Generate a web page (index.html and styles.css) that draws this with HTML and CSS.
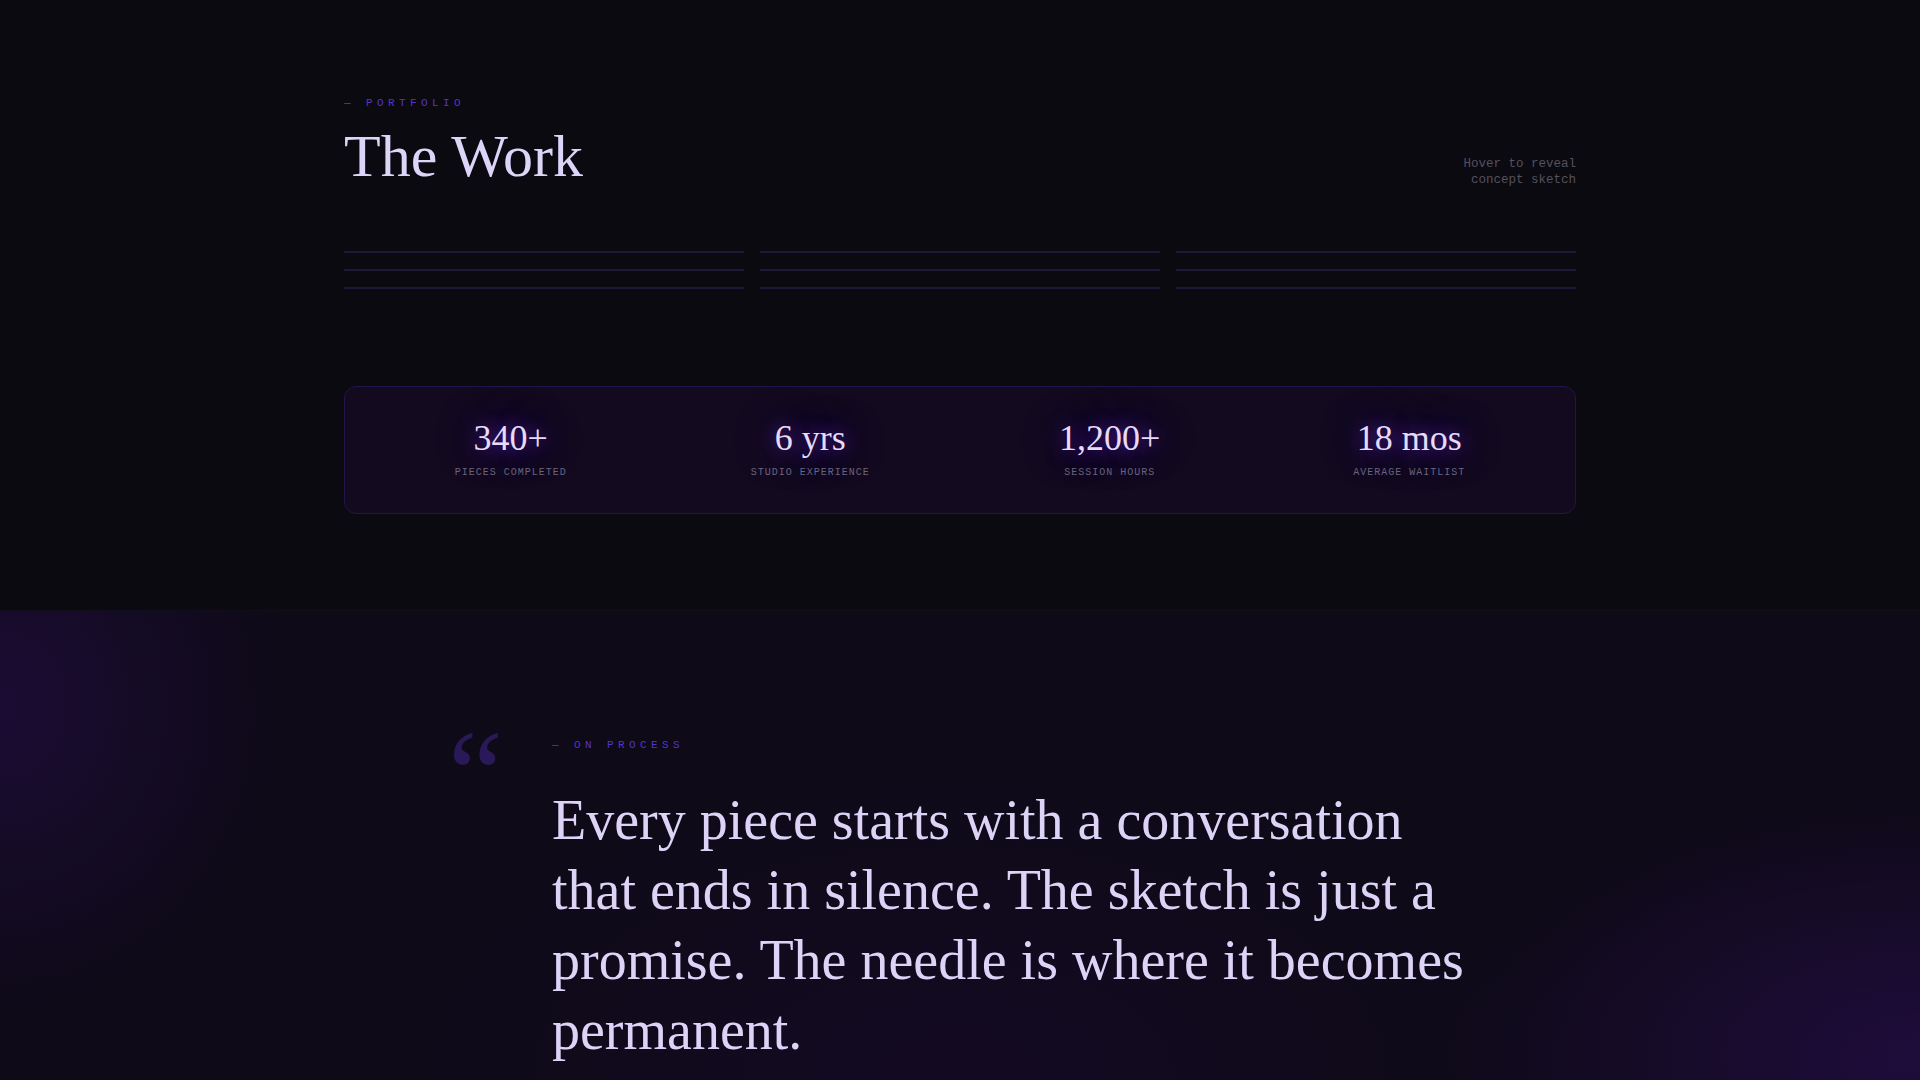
FILE: index.html
```html
<!DOCTYPE html>
<html lang="en">
<head>
  <meta charset="UTF-8" />
  <meta name="viewport" content="width=device-width, initial-scale=1.0"/>
  <title>Studio — The Work</title>
  <link rel="stylesheet" href="styles.css">
</head>
<body>

  <section class="work">
    <div class="container">
      <div class="eyebrow">— PORTFOLIO</div>

      <div class="work-head">
        <h2 class="title">The Work</h2>
        <p class="hint">Hover to reveal<br>concept sketch</p>
      </div>

      <div class="gallery">
        <div class="piece"><span></span><span></span><span></span></div>
        <div class="piece"><span></span><span></span><span></span></div>
        <div class="piece"><span></span><span></span><span></span></div>
      </div>

      <div class="stats">
        <div class="stat">
          <div class="stat-num">340+</div>
          <div class="stat-label">PIECES COMPLETED</div>
        </div>
        <div class="stat">
          <div class="stat-num">6 yrs</div>
          <div class="stat-label">STUDIO EXPERIENCE</div>
        </div>
        <div class="stat">
          <div class="stat-num">1,200+</div>
          <div class="stat-label">SESSION HOURS</div>
        </div>
        <div class="stat">
          <div class="stat-num">18 mos</div>
          <div class="stat-label">AVERAGE WAITLIST</div>
        </div>
      </div>
    </div>
  </section>

  <section class="process">
    <div class="quote-wrap">
      <div class="quote-mark">&ldquo;</div>
      <div class="quote-body">
        <div class="eyebrow">— ON PROCESS</div>
        <p class="quote">Every piece starts with a conversation that ends in silence. The sketch is just a promise. The needle is where it becomes permanent.</p>
      </div>
    </div>
  </section>

</body>
</html>
```

FILE: styles.css
```css
* {
  box-sizing: border-box;
}

body {
  margin: 0;
  background-color: #0b0a10;
  color: #ddd4f6;
  font-family: 'Liberation Serif', 'Times New Roman', serif;
  overflow: hidden;
}

.container {
  max-width: 1280px;
  margin: 0 auto;
  padding: 0 24px;
}

.eyebrow {
  font-family: 'Liberation Mono', monospace;
  font-size: 11px;
  line-height: 16px;
  letter-spacing: 0.4em;
  color: #5434cf;
}

/* ---- work ---- */

.work {
  padding: 95px 0 96px;
}

.work .eyebrow {
  margin-bottom: 13px;
}

.work-head {
  display: flex;
  justify-content: space-between;
  align-items: flex-end;
}

.title {
  margin: 0;
  font-weight: 400;
  font-size: 60px;
  line-height: 64px;
  color: #ddd5f7;
}

.hint {
  margin: 0;
  font-family: 'Liberation Mono', monospace;
  font-size: 12.5px;
  line-height: 16px;
  text-align: right;
  color: #55515f;
}

.gallery {
  display: grid;
  grid-template-columns: repeat(3, 1fr);
  gap: 16px;
  margin-top: 63px;
}

.piece {
  display: flex;
  flex-direction: column;
  gap: 16px;
}

.piece span {
  display: block;
  height: 2px;
  background: #1e1936;
}

.stats {
  display: grid;
  grid-template-columns: repeat(4, 1fr);
  margin-top: 97px;
  padding: 33px 16px 33px;
  background: #130a20;
  border: 1px solid #22154a;
  border-radius: 12px;
}

.stat {
  text-align: center;
}

.stat-num {
  font-size: 36px;
  line-height: 1;
  color: #e6dbf9;
  text-shadow: 0 0 18px rgba(112, 48, 230, 0.75), 0 0 40px rgba(80, 20, 180, 0.5);
}

.stat-label {
  margin-top: 9px;
  font-family: 'Liberation Mono', monospace;
  font-size: 10px;
  line-height: 15px;
  letter-spacing: 0.1em;
  color: #6a6380;
}

/* ---- process quote ---- */

.process {
  height: 470px;
  padding-top: 126px;
  border-top: 1px solid #120e1c;
  background:
    radial-gradient(ellipse 420px 460px at 0% 20%, rgba(40, 14, 80, 0.5), transparent 70%),
    radial-gradient(ellipse 700px 380px at 100% 95%, rgba(42, 14, 84, 0.6), transparent 70%),
    radial-gradient(ellipse 900px 500px at 50% 100%, rgba(30, 10, 56, 0.35), transparent 70%),
    #0e0a17;
}

.quote-wrap {
  max-width: 1024px;
  margin: 0 auto;
  display: grid;
  grid-template-columns: 80px 1fr;
  gap: 24px;
}

.quote-mark {
  margin-top: -24px;
  font-size: 124px;
  line-height: 1;
  height: 60px;
  color: #2a1958;
}

.quote {
  max-width: 920px;
  margin: 32px 0 0;
  font-size: 56px;
  line-height: 70px;
  color: #ddd3f7;
}
```
